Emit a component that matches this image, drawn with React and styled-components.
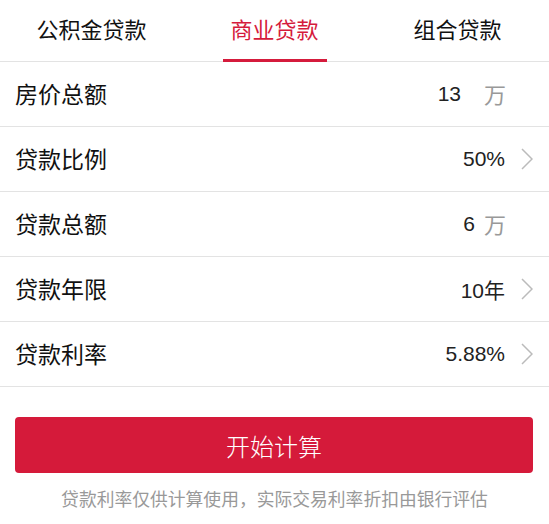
import styled, { createGlobalStyle } from 'styled-components';

const GlobalStyle = createGlobalStyle`
  body {
    margin: 0;
    background: #fff;
    font-family: "Liberation Sans", "Noto Sans CJK SC", sans-serif;
  }
`;

const Page = styled.div`
  width: 549px;
  background: #fff;
`;

const Tabs = styled.div`
  display: grid;
  grid-template-columns: repeat(3, 1fr);
  height: 61px;
  border-bottom: 1px solid #e3e3e3;
`;

const Tab = styled.div`
  position: relative;
  display: flex;
  align-items: center;
  justify-content: center;
  padding-bottom: 6px;
  font-size: 22px;
  color: ${(p) => (p.active ? '#d51b3c' : '#111')};

  &::after {
    content: '';
    display: ${(p) => (p.active ? 'block' : 'none')};
    position: absolute;
    left: 50%;
    bottom: -1px;
    width: 104px;
    height: 3px;
    margin-left: -52px;
    background: #d51b3c;
  }
`;

const Row = styled.div`
  display: flex;
  align-items: center;
  justify-content: space-between;
  height: 64px;
  padding: 0 16px 0 15px;
  border-bottom: 1px solid #e3e3e3;
`;

const Label = styled.span`
  margin-bottom: 2px;
  font-size: 23px;
  color: #111;
`;

const Right = styled.div`
  display: flex;
  align-items: center;
`;

const Value = styled.span`
  font-size: 21px;
  color: #222;
`;

const Unit = styled.span`
  margin-left: ${(p) => p.gap}px;
  margin-right: 27px;
  margin-bottom: 3px;
  font-size: 22px;
  color: #999;
`;

const Chevron = styled.svg`
  margin-left: 16px;
  width: 12px;
  height: 22px;
`;

const Button = styled.button`
  display: block;
  width: 518px;
  height: 56px;
  margin: 30px 0 0 15px;
  border: none;
  border-radius: 4px;
  background: #d51a3a;
  color: #fff;
  font-family: "Noto Sans CJK SC", sans-serif;
  font-size: 24px;
  font-weight: 300;
  cursor: pointer;
`;

const Note = styled.p`
  margin: 14px 0 0;
  line-height: 26px;
  text-align: center;
  font-size: 17.8px;
  color: #999;
`;

const Arrow = () => (
  <Chevron viewBox="0 0 12 22">
    <polyline points="1,1 11,11 1,21" fill="none" stroke="#bbb" strokeWidth="1.5" />
  </Chevron>
);

const rows = [
  { label: '房价总额', value: '13', unit: '万', gap: 23 },
  { label: '贷款比例', value: '50%' },
  { label: '贷款总额', value: '6', unit: '万', gap: 9 },
  { label: '贷款年限', value: '10年' },
  { label: '贷款利率', value: '5.88%' },
];

const App = () => {
  return (
    <Page>
      <GlobalStyle />
      <Tabs>
        <Tab>公积金贷款</Tab>
        <Tab active>商业贷款</Tab>
        <Tab>组合贷款</Tab>
      </Tabs>
      {rows.map((r) => (
        <Row key={r.label}>
          <Label>{r.label}</Label>
          <Right>
            <Value>{r.value}</Value>
            {r.unit ? <Unit gap={r.gap}>{r.unit}</Unit> : <Arrow />}
          </Right>
        </Row>
      ))}
      <Button>开始计算</Button>
      <Note>贷款利率仅供计算使用，实际交易利率折扣由银行评估</Note>
    </Page>
  );
};

export default App;
